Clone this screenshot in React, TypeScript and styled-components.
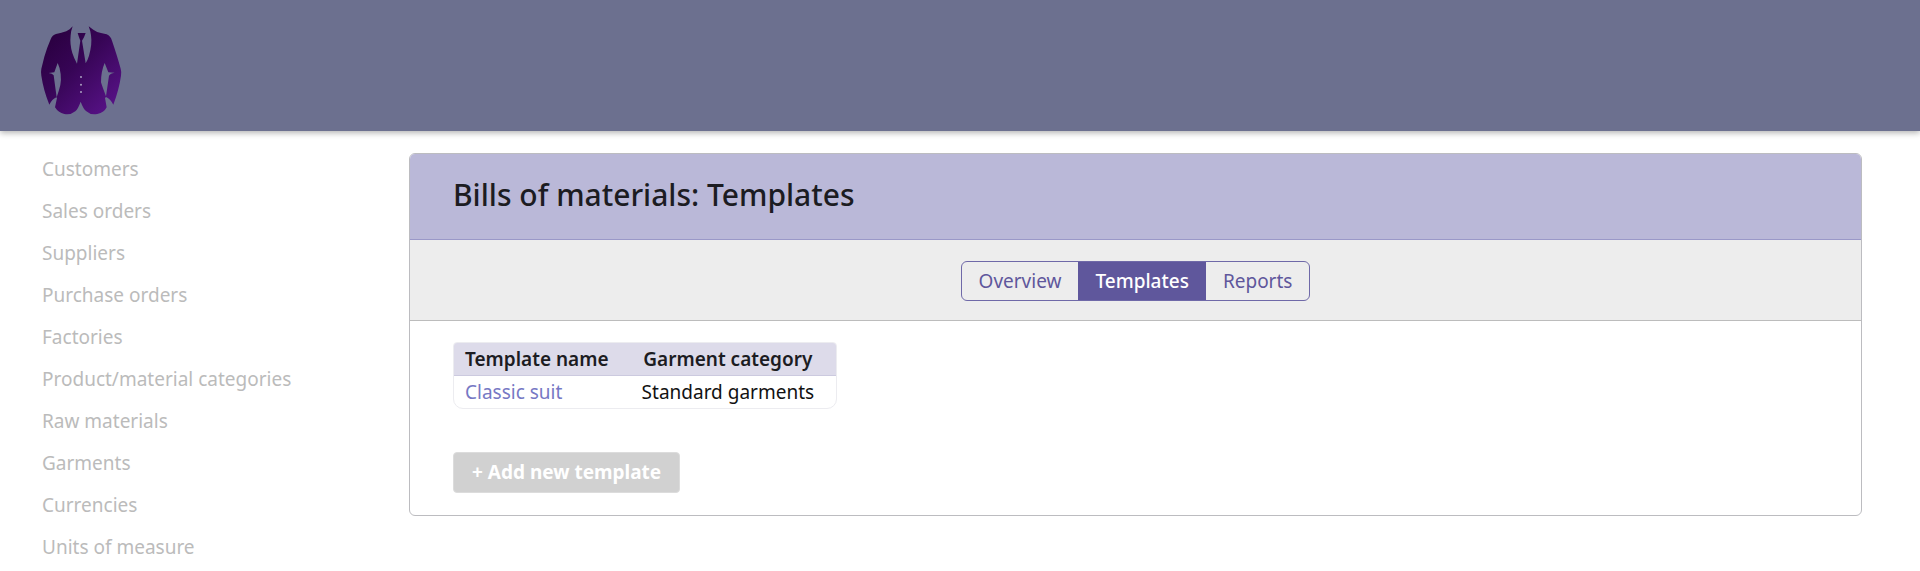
import React from 'react';
import styled, { createGlobalStyle } from 'styled-components';

const GlobalStyle = createGlobalStyle`
  *, *::before, *::after { box-sizing: border-box; }
  body {
    margin: 0;
    background: #fff;
    color: #1c1c22;
    font-family: 'Noto Sans', 'Open Sans', sans-serif;
    font-size: 19px;
    line-height: 32px;
  }
`;

const TopBar = styled.header`
  display: flex;
  align-items: flex-start;
  height: 131px;
  padding: 25px 39px;
  background: #6c708f;
  box-shadow: 0 2px 6px rgba(0, 0, 0, 0.3);
`;

const LogoLink = styled.a`
  display: block;
  line-height: 0;
`;

const Layout = styled.div`
  display: flex;
  align-items: flex-start;
`;

const SideNav = styled.nav`
  flex: 0 0 409px;
  padding: 17px 42px 0;
`;

const NavList = styled.ul`
  margin: 0;
  padding: 0;
  list-style: none;
`;

const NavLink = styled.a`
  display: block;
  color: #bbb;
  line-height: 42px;
  white-space: nowrap;
  text-decoration: none;
`;

const Card = styled.main`
  flex: 1;
  min-width: 0;
  margin: 22px 58px 22px 0;
  overflow: hidden;
  border: 1px solid #bcbcc0;
  border-radius: 6px;
`;

const CardHeader = styled.div`
  padding: 20px 43px 24px;
  background: #bab8d8;
  border-bottom: 1px solid #9a98c8;
`;

const Title = styled.h1`
  margin: 0;
  font-size: 30px;
  font-weight: 500;
  line-height: 41px;
`;

const TabBar = styled.div`
  display: flex;
  justify-content: center;
  padding: 21px 0 19px;
  background: #ededed;
  border-bottom: 1px solid #bcbcbc;
`;

const Tabs = styled.div`
  display: flex;
  overflow: hidden;
  border: 1px solid #6f69a8;
  border-radius: 6px;
`;

const Tab = styled.button<{ $active?: boolean }>`
  padding: 0 17px;
  border: 0;
  background: ${(p) => (p.$active ? '#5f579c' : 'transparent')};
  color: ${(p) => (p.$active ? '#fff' : '#5f579c')};
  font: inherit;
  font-weight: ${(p) => (p.$active ? 500 : 400)};
  line-height: 38px;
`;

const CardBody = styled.div`
  padding: 21px 43px 22px;
`;

const TableFrame = styled.div`
  width: fit-content;
  margin-bottom: 43px;
  overflow: hidden;
  border: 1px solid #ececf0;
  border-radius: 4px 4px 10px 10px;
`;

const Table = styled.table`
  border-collapse: collapse;
`;

const HeadCell = styled.th`
  padding: 0 22px 0 11px;
  background: #dddbea;
  border-bottom: 1px solid #cccadf;
  font-weight: 600;
  text-align: center;
  white-space: nowrap;
`;

const Cell = styled.td`
  padding: 0 22px 0 11px;
  color: #111;
  white-space: nowrap;
`;

const RowLink = styled.a`
  color: #7678c4;
  text-decoration: none;
`;

const AddButton = styled.button`
  display: block;
  padding: 0 18px;
  border: 1px solid #dcdcdc;
  border-radius: 4px;
  background: #d1d1d1;
  color: #fff;
  font: inherit;
  font-weight: 700;
  line-height: 39px;
`;

const sections = [
  'Customers',
  'Sales orders',
  'Suppliers',
  'Purchase orders',
  'Factories',
  'Product/material categories',
  'Raw materials',
  'Garments',
  'Currencies',
  'Units of measure',
];

const tabs = ['Overview', 'Templates', 'Reports'];

const templates = [{ name: 'Classic suit', category: 'Standard garments' }];

function SuitLogo() {
  return (
    <svg width="84" height="91" viewBox="117 74 252 273" aria-hidden="true">
      <defs>
        <linearGradient id="suit" x1="0.1" y1="0.1" x2="0.9" y2="1">
          <stop offset="0" stopColor="#2a0040" />
          <stop offset="0.4" stopColor="#370556" />
          <stop offset="1" stopColor="#5a138b" />
        </linearGradient>
      </defs>
      <g fill="url(#suit)">
        <path
          fillRule="evenodd"
          d="M218 78 L209 87 Q201 94 184 97 L168 101 Q157 104 152 117 Q140 145 133 169 L124 205 Q122 216 124 226 Q130 268 148 313 Q156 297 169 291 L171 293 L165 321 Q174 336 193 341 Q211 345 226 333 Q234 326 242 304 Q250 326 259 333 Q272 345 292 341 Q313 336 320 321 L315 293 L318 290 Q332 297 340 313 Q357 268 363 226 Q365 215 362 205 Q352 168 336 121 Q332 107 320 102 L303 98 Q289 95 280 88 L266 78 Q271 90 273 105 Q277 132 267 166 Q263 179 257 189 L246 121 L252 111 L257 98 L233 98 L237 111 L241 121 L231 190 Q222 174 217 158 Q209 132 212 105 Q213 91 218 78 Z
             M173 188 Q180 202 182 221 Q184 239 181 254 Q177 271 170 291 Q165 255 161 225 Q157 219 146 218 L163 216 Z
             M314 188 L325 216 L344 217 Q331 219 327 226 L318 288 Q308 262 303 246 Q303 213 314 188 Z"
        />
      </g>
      <g fill="#aaa0c0">
        <circle cx="243" cy="230" r="3" />
        <circle cx="243" cy="253" r="3" />
        <circle cx="243" cy="275" r="3" />
      </g>
    </svg>
  );
}

export default function App() {
  return (
    <>
      <GlobalStyle />
      <TopBar>
        <LogoLink href="#" aria-label="Home">
          <SuitLogo />
        </LogoLink>
      </TopBar>
      <Layout>
        <SideNav>
          <NavList>
            {sections.map((label) => (
              <li key={label}>
                <NavLink href="#">{label}</NavLink>
              </li>
            ))}
          </NavList>
        </SideNav>
        <Card>
          <CardHeader>
            <Title>Bills of materials: Templates</Title>
          </CardHeader>
          <TabBar>
            <Tabs>
              {tabs.map((label) => (
                <Tab key={label} type="button" $active={label === 'Templates'}>
                  {label}
                </Tab>
              ))}
            </Tabs>
          </TabBar>
          <CardBody>
            <TableFrame>
              <Table>
                <thead>
                  <tr>
                    <HeadCell>Template name</HeadCell>
                    <HeadCell>Garment category</HeadCell>
                  </tr>
                </thead>
                <tbody>
                  {templates.map((t) => (
                    <tr key={t.name}>
                      <Cell>
                        <RowLink href="#">{t.name}</RowLink>
                      </Cell>
                      <Cell>{t.category}</Cell>
                    </tr>
                  ))}
                </tbody>
              </Table>
            </TableFrame>
            <AddButton type="button">+ Add new template</AddButton>
          </CardBody>
        </Card>
      </Layout>
    </>
  );
}
